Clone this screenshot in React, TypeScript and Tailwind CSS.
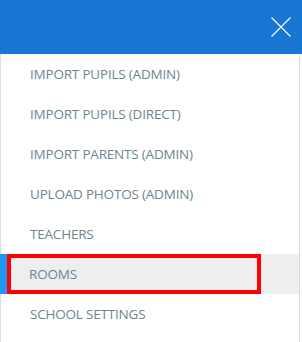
const items = [
  'IMPORT PUPILS (ADMIN)',
  'IMPORT PUPILS (DIRECT)',
  'IMPORT PARENTS (ADMIN)',
  'UPLOAD PHOTOS (ADMIN)',
  'TEACHERS',
  'ROOMS',
  'SCHOOL SETTINGS',
];

export default function App() {
  return (
    <div className="h-[342px] w-[302px] overflow-hidden bg-white font-['Open_Sans',sans-serif]">
      {/* top bar with close button */}
      <div className="flex h-[54px] items-center justify-end bg-[#1976d2] pr-[11px]">
        <svg width="20" height="20" viewBox="0 0 20 20" className="text-white">
          <path d="M0.5 0.5 L19.5 19.5 M19.5 0.5 L0.5 19.5" stroke="currentColor" strokeWidth="1.1" />
        </svg>
      </div>

      {/* menu list */}
      <ul className="h-[288px] w-[300px] border-x border-[#dcdcdc]">
        {items.map((label) => {
          const active = label === 'ROOMS';
          return (
            <li
              key={label}
              className={
                active
                  ? 'relative -ml-px flex h-10 items-center border-l-[7px] border-[#2196f3] bg-[#eeeeee] pl-[22px] text-[13.5px] tracking-[-0.2px] text-[#6d8592]'
                  : 'flex h-10 items-center pl-[29px] text-[13.5px] tracking-[-0.2px] text-[#6d8592]'
              }
            >
              {label}
              {active && (
                <span className="pointer-events-none absolute top-0 left-0 h-10 w-[254px] border-4 border-[#ff0000]" />
              )}
            </li>
          );
        })}
      </ul>
    </div>
  );
}
